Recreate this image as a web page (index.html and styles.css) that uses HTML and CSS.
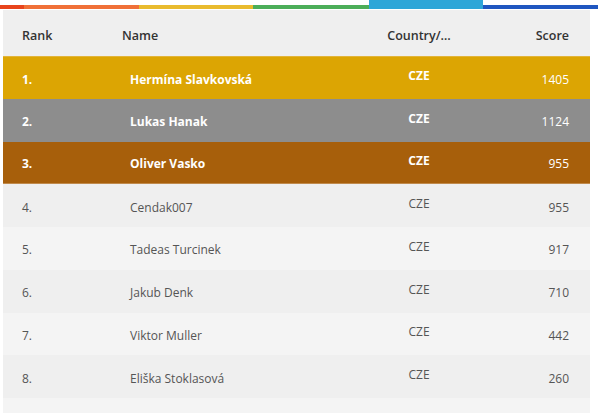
FILE: index.html
```html
<!DOCTYPE html>
<html>
<head>
<meta charset="utf-8">
<link rel="stylesheet" href="styles.css">
</head>
<body>
<div class="stripe">
  <span class="seg red"></span>
  <span class="seg orange"></span>
  <span class="seg yellow"></span>
  <span class="seg green"></span>
  <span class="seg cyan"></span>
  <span class="seg blue"></span>
</div>
<div class="table">
  <div class="row head">
    <div class="c-rank">Rank</div>
    <div class="c-name">Name</div>
    <div class="c-country">Country/…</div>
    <div class="c-score">Score</div>
  </div>
  <div class="row gold">
    <div class="c-rank">1.</div>
    <div class="c-name">Hermína Slavkovská</div>
    <div class="c-country">CZE</div>
    <div class="c-score">1405</div>
  </div>
  <div class="row silver">
    <div class="c-rank">2.</div>
    <div class="c-name">Lukas Hanak</div>
    <div class="c-country">CZE</div>
    <div class="c-score">1124</div>
  </div>
  <div class="row bronze">
    <div class="c-rank">3.</div>
    <div class="c-name">Oliver Vasko</div>
    <div class="c-country">CZE</div>
    <div class="c-score">955</div>
  </div>
  <div class="row even">
    <div class="c-rank">4.</div>
    <div class="c-name">Cendak007</div>
    <div class="c-country">CZE</div>
    <div class="c-score">955</div>
  </div>
  <div class="row odd">
    <div class="c-rank">5.</div>
    <div class="c-name">Tadeas Turcinek</div>
    <div class="c-country">CZE</div>
    <div class="c-score">917</div>
  </div>
  <div class="row even">
    <div class="c-rank">6.</div>
    <div class="c-name">Jakub Denk</div>
    <div class="c-country">CZE</div>
    <div class="c-score">710</div>
  </div>
  <div class="row odd">
    <div class="c-rank">7.</div>
    <div class="c-name">Viktor Muller</div>
    <div class="c-country">CZE</div>
    <div class="c-score">442</div>
  </div>
  <div class="row even">
    <div class="c-rank">8.</div>
    <div class="c-name">Eliška Stoklasová</div>
    <div class="c-country">CZE</div>
    <div class="c-score">260</div>
  </div>
  <div class="row odd empty"></div>
</div>
</body>
</html>
```

FILE: styles.css
```css
html, body {
  margin: 0;
  padding: 0;
  background: #ffffff;
  overflow: hidden;
}
body {
  font-family: "Open Sans", "Liberation Sans", sans-serif;
  font-size: 12px;
  color: #555555;
  width: 600px;
  height: 413px;
}
.stripe {
  display: flex;
  align-items: flex-end;
  height: 9px;
  width: 598px;
}
.seg {
  display: block;
  height: 4px;
}
.red { width: 24px; background: #e8441c; }
.orange { width: 115px; background: #f07038; }
.yellow { width: 114px; background: #e9bb2e; }
.green { width: 116px; background: #4cae59; }
.cyan { width: 114px; height: 9px; background: #2ea6d8; }
.blue { width: 115px; background: #1f56c0; }

.table {
  margin: 1px 0 0 3px;
  width: 587px;
}
.row {
  display: grid;
  grid-template-columns: 100px 265px 64px 1fr;
  align-items: center;
  height: 42.75px;
  padding: 0 21px 0 19px;
  box-sizing: border-box;
}
.row > div {
  padding-top: 3px;
  white-space: nowrap;
}
.row .c-name { padding-left: 8px; }
.row .c-country {
  text-align: center;
  padding-top: 0;
  padding-bottom: 4px;
}
.c-score { text-align: right; }

.head {
  height: 46px;
  background: #efefef;
  color: #333333;
  font-weight: 600;
  font-size: 12.5px;
}
.head > div { padding-top: 5px; }
.head .c-name { padding-left: 0; }
.head .c-country { padding-top: 5px; padding-bottom: 0; }

.gold, .silver, .bronze {
  color: #ffffff;
  font-weight: 700;
}
.gold .c-score, .silver .c-score, .bronze .c-score { font-weight: 400; }
.gold { background: #dca503; border-top: 1px solid #e2b43a; }
.silver { background: #8d8d8d; }
.bronze { background: #a75f0b; border-bottom: 1px solid #c08a4c; }
.even { background: #efefef; }
.odd { background: #f4f4f4; }
.empty { height: 20px; }
```
